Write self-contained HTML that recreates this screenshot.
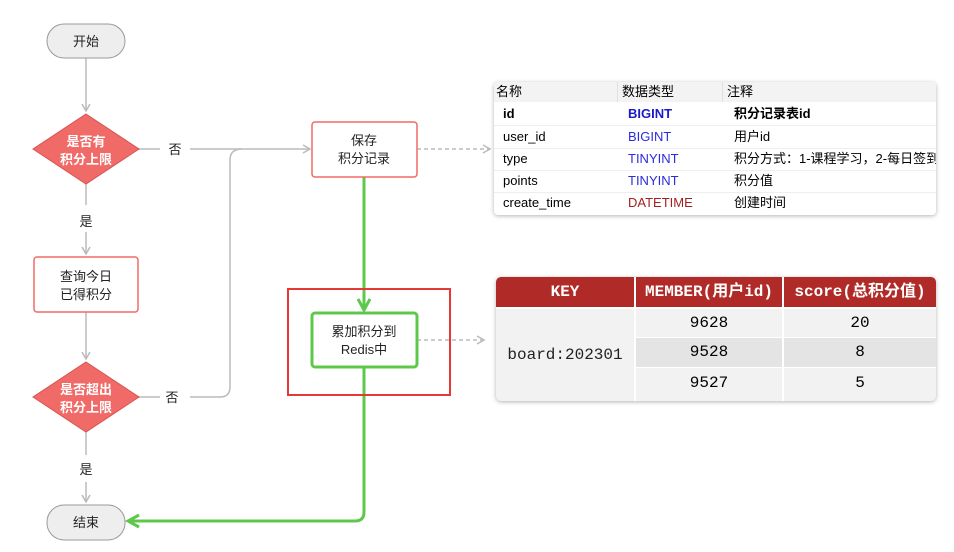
<!DOCTYPE html>
<html><head><meta charset="utf-8"><style>
body{margin:0;width:954px;height:552px;background:#fff;position:relative;overflow:hidden;font-family:"Liberation Sans","Noto Sans CJK SC",sans-serif}
.a{position:absolute}
.t1{position:absolute;left:494px;top:82px;width:442px;height:133px;box-shadow:0 1px 4px rgba(0,0,0,.3);border-radius:4px;overflow:hidden;background:#fff;font-size:13px}
.t1 .r{position:absolute;left:0;width:442px;height:22px;border-bottom:1px solid #eee}
.t1 .c{position:absolute;top:0;line-height:22px;white-space:nowrap;overflow:hidden}
.t2{position:absolute;left:496px;top:277px;width:440px;height:124px;box-shadow:0 1px 4px rgba(0,0,0,.3);border-radius:5px;overflow:hidden;background:#f2f2f2;font-family:"Liberation Mono","Noto Sans CJK SC",monospace;font-size:16px}
</style></head><body>
<svg class="a" style="left:0;top:0" width="954" height="552">
<defs>
<marker id="ag" markerWidth="10" markerHeight="10" refX="8" refY="5" orient="auto" markerUnits="userSpaceOnUse"><path d="M1 1L8 5L1 9" fill="none" stroke="#bbb" stroke-width="1.5"/></marker>
<marker id="agr" markerWidth="16" markerHeight="16" refX="13" refY="8" orient="auto" markerUnits="userSpaceOnUse"><path d="M2 2L13 8L2 14" fill="none" stroke="#5dc84a" stroke-width="3"/></marker>
</defs>
<g stroke="#bbb" stroke-width="1.5" fill="none">
<path d="M86 58V111" marker-end="url(#ag)"/>
<path d="M86 184V254" marker-end="url(#ag)"/>
<path d="M86 312V359" marker-end="url(#ag)"/>
<path d="M86 432V502" marker-end="url(#ag)"/>
<path d="M138 149H310" marker-end="url(#ag)"/>
<path d="M138 397H220Q230 397 230 387V160Q230 149 242 149"/>
<path d="M417 149H490" stroke-dasharray="4 3" marker-end="url(#ag)"/>
<path d="M417 340H484" stroke-dasharray="4 3" marker-end="url(#ag)"/>
</g>
<g stroke="#fff" stroke-width="8"><path d="M86 205V232M86 455V482M160 149H190M160 397H190"/></g>
<g stroke="#5dc84a" stroke-width="3" fill="none">
<path d="M364 177V310" marker-end="url(#agr)"/>
<path d="M364 367V512Q364 521 355 521H128" marker-end="url(#agr)"/>
</g>
<rect x="47" y="24" width="78" height="34" rx="17" fill="#eee" stroke="#999"/>
<rect x="47" y="505" width="78" height="35" rx="17" fill="#eee" stroke="#999"/>
<path d="M86 114L139 149L86 184L33 149Z" fill="#f06a67" stroke="#d85553"/>
<path d="M86 362L139 397L86 432L33 397Z" fill="#f06a67" stroke="#d85553"/>
<rect x="34" y="257" width="104" height="55" rx="3" fill="#fff" stroke="#f06a67" stroke-width="1.5"/>
<rect x="312" y="122" width="105" height="55" rx="3" fill="#fff" stroke="#f06a67" stroke-width="1.5"/>
<rect x="312" y="313" width="105" height="54" rx="3" fill="#fff" stroke="#5dc84a" stroke-width="3"/>
<rect x="288" y="289" width="162" height="106" fill="none" stroke="#e53935" stroke-width="2"/>
<g font-size="13" text-anchor="middle" fill="#222">
<text x="86" y="46">开始</text><text x="86" y="527">结束</text>
<text x="86" y="281">查询今日</text><text x="86" y="299">已得积分</text>
<text x="364" y="145">保存</text><text x="364" y="163">积分记录</text>
<text x="364" y="336">累加积分到</text><text x="364" y="354">Redis中</text>
<text x="175" y="154">否</text><text x="172" y="402">否</text>
<text x="86" y="226">是</text><text x="86" y="474">是</text>
</g>
<g font-size="13" text-anchor="middle" fill="#fff" font-weight="bold">
<text x="86" y="146">是否有</text><text x="86" y="164">积分上限</text>
<text x="86" y="394">是否超出</text><text x="86" y="412">积分上限</text>
</g>
</svg>
<div class="t1">
<div class="r" style="top:0;height:20px;background:#f3f3f3;border:0"><span class="c" style="left:2px;line-height:20px">名称</span><span class="c" style="left:128px;line-height:20px">数据类型</span><span class="c" style="left:233px;line-height:20px">注释</span></div>
<div class="a" style="left:123px;top:0;width:1px;height:20px;background:#e0e0e0"></div>
<div class="a" style="left:228px;top:0;width:1px;height:20px;background:#e0e0e0"></div>
<div class="r" style="top:21px;font-weight:bold"><span class="c" style="left:9px">id</span><span class="c" style="left:134px;color:#1a1acc">BIGINT</span><span class="c" style="left:240px">积分记录表id</span></div>
<div class="r" style="top:44px"><span class="c" style="left:9px">user_id</span><span class="c" style="left:134px;color:#2b2be0">BIGINT</span><span class="c" style="left:240px">用户id</span></div>
<div class="r" style="top:66px"><span class="c" style="left:9px">type</span><span class="c" style="left:134px;color:#2b2be0">TINYINT</span><span class="c" style="left:240px">积分方式：1-课程学习，2-每日签到，</span></div>
<div class="r" style="top:88px"><span class="c" style="left:9px">points</span><span class="c" style="left:134px;color:#2b2be0">TINYINT</span><span class="c" style="left:240px">积分值</span></div>
<div class="r" style="top:110px;border:0"><span class="c" style="left:9px">create_time</span><span class="c" style="left:134px;color:#a32020">DATETIME</span><span class="c" style="left:240px">创建时间</span></div>
</div>
<div class="t2">
<div class="a" style="left:0;top:0;width:440px;height:30px;background:#b02a27"></div>
<div class="a" style="left:139px;top:60px;width:301px;height:30px;background:#e4e4e4"></div>
<div class="a" style="left:138px;top:0;width:2px;height:124px;background:#fff"></div>
<div class="a" style="left:286px;top:0;width:2px;height:124px;background:#fff"></div>
<div class="a" style="left:0;top:30px;width:440px;height:2px;background:#fff"></div>
<div class="a" style="left:139px;top:60px;width:301px;height:1px;background:#fff"></div>
<div class="a" style="left:139px;top:90px;width:301px;height:1px;background:#fff"></div>
<div class="a" style="left:0;top:0;width:138px;line-height:30px;text-align:center;color:#fff;font-weight:bold">KEY</div>
<div class="a" style="left:140px;top:0;width:146px;line-height:30px;text-align:center;color:#fff;font-weight:bold">MEMBER(用户id)</div>
<div class="a" style="left:288px;top:0;width:152px;line-height:30px;text-align:center;color:#fff;font-weight:bold">score(总积分值)</div>
<div class="a" style="left:0;top:32px;width:138px;line-height:92px;text-align:center;color:#222">board:202301</div>
<div class="a" style="left:140px;top:32px;width:146px;line-height:28px;text-align:center">9628</div>
<div class="a" style="left:288px;top:32px;width:152px;line-height:28px;text-align:center">20</div>
<div class="a" style="left:140px;top:61px;width:146px;line-height:29px;text-align:center">9528</div>
<div class="a" style="left:288px;top:61px;width:152px;line-height:29px;text-align:center">8</div>
<div class="a" style="left:140px;top:91px;width:146px;line-height:31px;text-align:center">9527</div>
<div class="a" style="left:288px;top:91px;width:152px;line-height:31px;text-align:center">5</div>
</div>
</body></html>
